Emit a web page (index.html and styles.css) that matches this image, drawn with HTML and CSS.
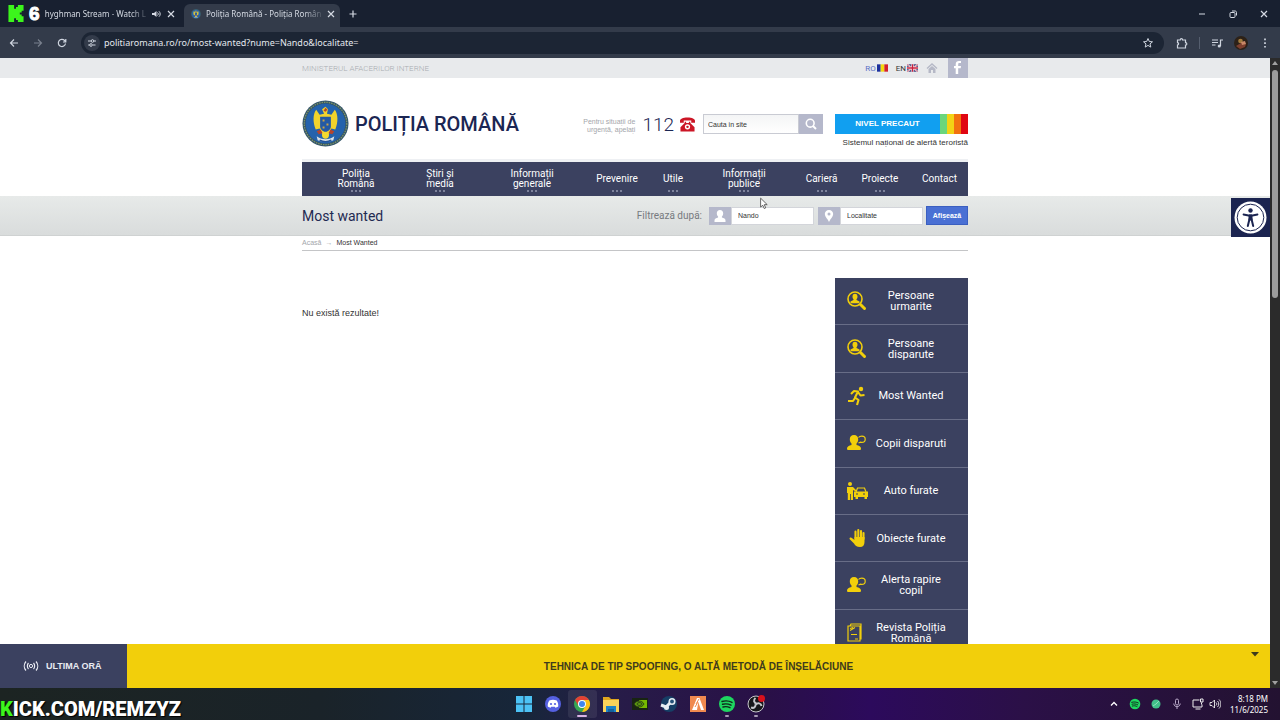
FILE: index.html
```html
<!DOCTYPE html>
<html lang="ro">
<head>
    <meta charset="utf-8">
    <title>Poliția Română - Most wanted</title>
    <link rel="stylesheet" href="styles.css">
</head>
<body>

<svg class="defs" width="0" height="0" aria-hidden="true">
    <symbol id="i-close" viewBox="0 0 10 10"><path d="M2 2l6 6M8 2l-6 6" fill="none" stroke="currentColor" stroke-width="1.2"/></symbol>
    <symbol id="i-lens" viewBox="0 0 22 22">
        <circle cx="9" cy="9" r="7" fill="none" stroke="currentColor" stroke-width="1.6"/>
        <path d="M9 3.800c1.700 0 2.500 1.200 2.500 2.800s-.5 2.200-1 2.700v.8l3 1.400v1.700h-9v-1.700l3-1.400v-.8c-.5-.5-1-1.100-1-2.700S7.300 3.800 9 3.800z" fill="currentColor"/>
        <path d="M14.500 14.500l4 4" stroke="currentColor" stroke-width="3" stroke-linecap="round"/>
    </symbol>
    <symbol id="i-child" viewBox="0 0 22 22">
        <path d="M8 3c2.800 0 4.200 1.800 4.200 4.300 0 2-.7 3.500-1.700 4.300v1.400c2.500.6 4.500 1.600 4.500 3.500 0 1-.5 1.500-1.500 1.500h-11c-1 0-1.500-.5-1.500-1.500 0-1.900 2-2.900 4.500-3.500v-1.400c-1-.8-1.700-2.300-1.700-4.300C3.800 4.800 5.200 3 8 3z" fill="currentColor"/>
        <path d="M12.500 5.500c.8-1 2-1.300 3.300-1.300 2 0 3.400 1.300 3.400 3s-1.400 3.200-3.400 3.200c-.5 0-1-.1-1.400-.3L12.500 11" fill="none" stroke="currentColor" stroke-width="1.200"/>
    </symbol>
    <symbol id="i-spotify" viewBox="0 0 18 18">
        <circle cx="9" cy="9" r="8" fill="#1ed760"/>
        <path d="M4 6.500c3.500-1 7-.7 10 .9M4.500 9.300c3-.8 6-.5 8.500.9M5 12c2.500-.7 5-.4 7 .7" fill="none" stroke="#10281a" stroke-width="1.400" stroke-linecap="round"/>
    </symbol>
    <symbol id="i-crest" viewBox="0 0 48 48">
        <circle cx="24" cy="24" r="23.500" fill="#34556a"/>
        <circle cx="24" cy="24" r="21.700" fill="none" stroke="#7f9465" stroke-width="1.300" stroke-dasharray="1.500 1"/>
        <circle cx="24" cy="24" r="20.300" fill="#2462ac"/>
        <path d="M24 7l2.500 2.500-1 4.500 4.500 1 3.500-5c3.500 4.500 3.500 13 .5 20l-4-1-3 7h-6l-3-7-4 1c-3-7-3-15.500.5-20l3.500 5 4.500-1-2-4.500z" fill="#f1d32c"/>
        <path d="M18.500 17h11v10c0 3-2.500 4.500-5.500 6-3-1.500-5.500-3-5.500-6z" fill="#2359a4"/>
        <path d="M21 20h2v2h-2zM25 24h2v2h-2zM21 27h2v2h-2z" fill="#c9a448"/>
        <path d="M24 8l2 2-2 2-2-1zM15 32l4-2 2 4-4 1zM33 32l-4-2-2 4 4 1z" fill="#b5452e"/>
        <circle cx="24" cy="36" r="3.500" fill="#f3d92f"/>
        <path d="M15 37c5 4 13 4 18 0l-1 4c-5 2-11 2-16 0z" fill="#dbe3e6"/>
        <path d="M18 41c4 2 8 2 12 0" fill="none" stroke="#24549b" stroke-width="1.500"/>
    </symbol>
</svg>

<div class="window">

    <div class="tabbar">
        <div class="tab tab-stream">
            <svg class="kick" viewBox="0 0 16 18"><path d="M0 0h6v4h2V2h2V0h6v6h-2v2h-2v2h2v2h2v6h-6v-2H8v-2H6v4H0z" fill="#3cf51c"/></svg>
            <b class="count">6</b>
            <span class="tab-title">hyghman Stream - Watch L</span>
            <svg class="icon-10" viewBox="0 0 10 10"><path d="M1 4h2l2.500-2v6L3 6H1z" fill="currentColor"/><path d="M6.500 3.500c1 1 1 2 0 3M8 2.300c1.600 1.600 1.600 3.800 0 5.400" fill="none" stroke="currentColor"/></svg>
            <button class="plain" aria-label="Close tab"><svg class="icon-10"><use href="#i-close"/></svg></button>
        </div>
        <div class="tab tab-active">
            <svg class="icon-10"><use href="#i-crest"/></svg>
            <span class="tab-title">Poliția Română - Poliția Român</span>
            <button class="plain" aria-label="Close tab"><svg class="icon-10"><use href="#i-close"/></svg></button>
        </div>
        <button class="plain new-tab" aria-label="New tab"><svg class="icon-10" viewBox="0 0 10 10"><path d="M5 1.500v7M1.500 5h7" stroke="currentColor" stroke-width="1.200"/></svg></button>
        <div class="window-buttons">
            <button class="plain" aria-label="Minimize"><svg class="icon-10" viewBox="0 0 10 10"><path d="M2 5h6" stroke="currentColor"/></svg></button>
            <button class="plain" aria-label="Restore"><svg class="icon-10" viewBox="0 0 10 10"><rect x="2" y="3.500" width="5" height="5" rx="1" fill="none" stroke="currentColor"/><path d="M4 2h3c1 0 1.500.5 1.500 1.500V6.500" fill="none" stroke="currentColor"/></svg></button>
            <button class="plain" aria-label="Close"><svg class="icon-10"><use href="#i-close"/></svg></button>
        </div>
    </div>

    <div class="toolbar">
        <button class="plain" aria-label="Back"><svg class="icon-10" viewBox="0 0 10 10"><path d="M9 5H1.500M5 1.500L1.500 5 5 8.500" fill="none" stroke="currentColor" stroke-width="1.200"/></svg></button>
        <button class="plain dim" aria-label="Forward"><svg class="icon-10" viewBox="0 0 10 10"><path d="M1 5h7.500M5 1.500L8.500 5 5 8.500" fill="none" stroke="currentColor" stroke-width="1.200"/></svg></button>
        <button class="plain" aria-label="Reload"><svg class="icon-10" viewBox="0 0 10 10"><path d="M8.500 5.500A3.600 3.600 0 1 1 7.600 2.500L8.600 3.700M8.800 1v3H6" fill="none" stroke="currentColor" stroke-width="1.200"/></svg></button>
        <div class="address">
            <span class="site-info"><svg class="icon-10" viewBox="0 0 10 10"><path d="M1 3h3M8.500 7H6M1.200 7h1.300M7 3h2" stroke="currentColor"/><circle cx="5.500" cy="3" r="1.300" fill="none" stroke="currentColor"/><circle cx="4" cy="7" r="1.300" fill="none" stroke="currentColor"/></svg></span>
            <input type="text" class="url" aria-label="Address" value="politiaromana.ro/ro/most-wanted?nume=Nando&amp;localitate=">
            <button class="plain" aria-label="Bookmark"><svg class="icon-12" viewBox="0 0 12 12"><path d="M6 1.500l1.300 3 3.200.3L8 6.900l.8 3.200L6 8.400l-2.800 1.700L4 6.900 1.500 4.800l3.200-.3z" fill="none" stroke="currentColor"/></svg></button>
        </div>
        <div class="toolbar-end">
            <svg class="icon-12" viewBox="0 0 12 12"><path d="M1.500 3h2.700c0-1.800 2.400-1.800 2.400 0h2.900v2.700c1.800 0 1.800 2.400 0 2.400v2.900h-8V8c1.500-.3 1.500-2 0-2.300z" fill="none" stroke="currentColor" stroke-width="1.200"/></svg>
            <span class="sep"></span>
            <svg class="icon-12" viewBox="0 0 12 12"><path d="M1 3h6M1 5.500h6M1 8h3.500M9.500 9V3H12" fill="none" stroke="currentColor" stroke-width="1.200"/><circle cx="8.300" cy="9" r="1.600" fill="currentColor"/></svg>
            <svg class="icon-14" viewBox="0 0 14 14"><circle cx="7" cy="7" r="7" fill="#2c2118"/><circle cx="6.500" cy="5" r="2.300" fill="#a17b3e"/><path d="M2 10l5-3 5 1-1 3-5 2z" fill="#7d3f2e"/><path d="M7 6l4-1 1 3-4 1z" fill="#c98868"/></svg>
            <svg class="icon-12" viewBox="0 0 12 12"><path d="M6 1.500v1.700M6 5.200v1.700M6 8.900v1.700" stroke="currentColor" stroke-width="1.700"/></svg>
        </div>
    </div>

    <div class="viewport">
        <div class="page">
            <div class="site">

                <div class="topstrip">
                    <div class="wrap topstrip-in">
                        <span class="ministry">MINISTERUL AFACERILOR INTERNE</span>
                        <a href="#" class="lang lang-ro">RO<svg class="flag" viewBox="0 0 12 8"><path d="M0 0h4v8H0z" fill="#1c2f9c"/><path d="M4 0h4v8H4z" fill="#f5d80c"/><path d="M8 0h4v8H8z" fill="#d3202c"/></svg></a>
                        <a href="#" class="lang">EN<svg class="flag" viewBox="0 0 12 8"><path d="M0 0h12v8H0z" fill="#2a3272"/><path d="M0 0l12 8M12 0L0 8" stroke="#fff" stroke-width="1.600"/><path d="M0 0l12 8M12 0L0 8" stroke="#d3324a" stroke-width=".7"/><path d="M6 0v8M0 4h12" stroke="#fff" stroke-width="2.600"/><path d="M6 0v8M0 4h12" stroke="#c9203c" stroke-width="1.500"/></svg></a>
                        <a href="#" class="home" aria-label="Acasă"><svg class="icon-12" viewBox="0 0 12 12"><path d="M1 6.500L6 2l5 4.500" fill="none" stroke="#b5b8c6" stroke-width="1.400"/><path d="M2.500 7L6 4l3.500 3v4h-2.500V8H5v3H2.500z" fill="#b5b8c6"/></svg></a>
                        <a href="#" class="fb" aria-label="Facebook"><svg viewBox="0 0 20 20"><path d="M13 5h-1.500c-1 0-1.300.5-1.300 1.400V8H13l-.3 2.300h-2.500V16H7.700v-5.700H6V8h1.700V6.200C7.700 4 9 2.900 11 2.900l2 .1z" fill="#fff"/></svg></a>
                    </div>
                </div>

                <div class="wrap header">
                    <a href="#" class="brand"><svg class="crest"><use href="#i-crest"/></svg>POLIȚIA ROMÂNĂ</a>
                    <div class="header-tools">
                        <span class="urgent">Pentru situații de urgență, apelați</span>
                        <span class="tel">112</span>
                        <svg class="phone" viewBox="0 0 18 16"><path d="M1 6V4c0-2 3-3.500 8-3.500S17 2 17 4v2h-4V3.800H5V6z" fill="#cc1626"/><path d="M6 5h1.500v1.500h3V5H12v1.500l4.500 4.500v4.500h-15V11L6 6.500z" fill="#cc1626"/><circle cx="9" cy="10.500" r="2.800" fill="#fff"/><circle cx="9" cy="10.500" r="1.300" fill="#cc1626"/></svg>
                        <form class="search">
                            <input type="text" aria-label="Cauta in site" value="Cauta in site">
                            <button type="button" aria-label="Caută"><svg class="icon-12" viewBox="0 0 12 12"><circle cx="5.200" cy="5.200" r="3.900" fill="none" stroke="#fff" stroke-width="1.600"/><path d="M8 8l3 3" stroke="#fff" stroke-width="2"/></svg></button>
                        </form>
                        <div class="alert">
                            <a href="#" class="alert-level"><span>NIVEL PRECAUT</span><i class="c-green"></i><i class="c-yellow"></i><i class="c-orange"></i><i class="c-red"></i></a>
                            <div class="alert-note">Sistemul național de alertă teroristă</div>
                        </div>
                    </div>
                </div>

                <nav class="wrap menu">
                    <a href="#" class="more">Poliția<br>Română</a>
                    <a href="#" class="more">Știri și<br>media</a>
                    <a href="#" class="more">Informații<br>generale</a>
                    <a href="#" class="more">Prevenire</a>
                    <a href="#" class="more">Utile</a>
                    <a href="#" class="more">Informații<br>publice</a>
                    <a href="#" class="more">Carieră</a>
                    <a href="#" class="more">Proiecte</a>
                    <a href="#">Contact</a>
                </nav>

                <div class="titleband">
                    <div class="wrap titleband-in">
                        <h1>Most wanted</h1>
                        <form class="filter">
                            <span class="filter-label">Filtrează după:</span>
                            <label for="nume" aria-label="Nume"><svg viewBox="0 0 22 18"><path d="M11 3c2 0 3.200 1.300 3.200 3.200 0 1.500-.6 2.600-1.300 3.300v1.100c2 .5 3.600 1.200 3.600 2.900V15h-11v-1.500c0-1.700 1.600-2.400 3.600-2.900V9.500c-.7-.7-1.300-1.800-1.300-3.300C7.800 4.300 9 3 11 3z" fill="#fff"/></svg></label>
                            <input type="text" id="nume" value="Nando">
                            <label for="localitate" aria-label="Localitate" class="second"><svg viewBox="0 0 22 18"><path d="M11 3c2.500 0 4.200 1.700 4.200 4 0 2.700-3 5-4.200 8-1.200-3-4.200-5.300-4.200-8 0-2.300 1.700-4 4.200-4z" fill="#fff"/><circle cx="11" cy="7" r="1.500" fill="#b5b8cb"/></svg></label>
                            <input type="text" id="localitate" value="Localitate">
                            <button type="button">Afișează</button>
                        </form>
                    </div>
                </div>

                <div class="wrap crumbs"><a href="#">Acasă</a><span class="arrow">→</span><span>Most Wanted</span></div>

                <div class="wrap main">
                    <p class="result">Nu există rezultate!</p>
                    <div class="sidebar">
                        <a href="#"><svg><use href="#i-lens"/></svg><span>Persoane urmarite</span></a>
                        <a href="#"><svg><use href="#i-lens"/></svg><span>Persoane disparute</span></a>
                        <a href="#"><svg viewBox="0 0 22 22"><circle cx="15" cy="4" r="2.200" fill="currentColor"/><path d="M5 9l3-3 4 .5-3 6 3.500 2.500-1.500 5M12 7l2.500 3.500L18.500 10M9 13l-2 3H2" fill="none" stroke="currentColor" stroke-width="2.100" stroke-linejoin="round"/></svg><span>Most Wanted</span></a>
                        <a href="#"><svg><use href="#i-child"/></svg><span>Copii disparuti</span></a>
                        <a href="#"><svg viewBox="0 0 22 22"><circle cx="4" cy="4" r="2" fill="currentColor"/><path d="M1 7h6l3 3v1.500L7 10v10H4.800v-6h-.8v6H1.800v-7H1z" fill="currentColor"/><path d="M10 12l1.500-4h7l1.500 4" fill="none" stroke="currentColor" stroke-width="1.200"/><path d="M8 11.500h14v5.500h-1V19h-2.500v-2H12V19H9.500v-2H8z" fill="currentColor"/><path d="M10 14h2M17 14h2" stroke="#3b4160" stroke-width="1.200"/></svg><span>Auto furate</span></a>
                        <a href="#"><svg viewBox="0 0 22 22"><path d="M9.500 12V4.500M12.300 11V3M15 11V4M17.500 12V6" stroke="currentColor" stroke-width="2.100" stroke-linecap="round"/><path d="M8.500 10h10v5c0 3-1.500 5-4.500 5-3.500 0-4.700-1.500-6-3.500L3.500 12c0-1.500 1.500-1.800 2.700-.8L8.500 13z" fill="currentColor"/></svg><span>Obiecte furate</span></a>
                        <a href="#"><svg><use href="#i-child"/></svg><span>Alerta rapire copil</span></a>
                        <a href="#"><svg viewBox="0 0 22 22"><path d="M2 4h12v15H2zM4 4l1-2h10v15h-1M4 6.500l3-1M4 8.500l5-3M5 12.500h6M9 17h3" fill="none" stroke="currentColor" stroke-width="1.200"/></svg><span>Revista Poliția Română</span></a>
                    </div>
                </div>

                <button class="access" aria-label="Accesibilitate"><svg viewBox="0 0 39 39"><circle cx="19.500" cy="19.500" r="16" fill="#fff"/><circle cx="19.500" cy="19.500" r="13.300" fill="none" stroke="#1b2450" stroke-width="1"/><circle cx="19.500" cy="12.500" r="2.200" fill="#1b2450"/><path d="M12.500 16.500l5 1h4l5-1" fill="none" stroke="#1b2450" stroke-width="1.800" stroke-linecap="round"/><path d="M18 17h3v5h-3z" fill="#1b2450" stroke="#1b2450"/><path d="M18.500 21l-1.700 7M20.500 21l1.700 7" stroke="#1b2450" stroke-width="2" stroke-linecap="round"/></svg></button>
            </div>

            <div class="ticker">
                <div class="ticker-label"><svg class="live" viewBox="0 0 16 12"><circle cx="8" cy="6" r="1.600" fill="none" stroke="currentColor"/><path d="M5.500 3c-1.500 1.600-1.500 4.400 0 6M10.500 3c1.500 1.600 1.500 4.400 0 6M3 1.500c-2.300 2.600-2.300 6.400 0 9M13 1.500c2.300 2.600 2.300 6.400 0 9" fill="none" stroke="currentColor" stroke-width="1.200"/></svg>ULTIMA ORĂ</div>
                <a href="#" class="ticker-news">TEHNICA DE TIP SPOOFING, O ALTĂ METODĂ DE ÎNȘELĂCIUNE</a>
                <button class="ticker-toggle" aria-label="Ascunde"><svg viewBox="0 0 8 5"><path d="M0 0h8L4 4.500z" fill="#3e3b1c"/></svg></button>
            </div>
        </div>

        <div class="scrollbar">
            <svg viewBox="0 0 10 10"><path d="M5 3l3 4H2z" fill="#a0a0a0"/></svg>
            <div class="thumb"></div>
            <svg class="down" viewBox="0 0 10 10"><path d="M5 7l3-4H2z" fill="#a0a0a0"/></svg>
        </div>
    </div>

    <div class="taskbar">
        <div class="watermark"><b>K</b>ICK.COM/REMZYZ</div>
        <div class="apps">
            <span><svg viewBox="0 0 18 18"><path d="M1 1h7.500v7.500H1zM9.500 1H17v7.500H9.500zM1 9.500h7.500V17H1zM9.500 9.500H17V17H9.500z" fill="#4cc2f5"/></svg></span>
            <span><svg viewBox="0 0 18 18"><circle cx="9" cy="9" r="8" fill="#5560e0"/><path d="M5.300 5.500c2.400-1 5-1 7.400 0 1.300 2 1.800 4 1.500 6-1 .8-2 1-2.800 1.200l-.6-1H7.200l-.6 1c-.8-.2-1.800-.4-2.800-1.200-.3-2 .2-4 1.500-6z" fill="#fff"/><circle cx="7" cy="9" r="1.100" fill="#5560e0"/><circle cx="11" cy="9" r="1.100" fill="#5560e0"/></svg></span>
            <span class="current"><svg viewBox="0 0 18 18"><circle cx="9" cy="9" r="8" fill="#36a852"/><path d="M2.070 5A8 8 0 0 1 15.930 5H9a4 4 0 0 0-3.460 6z" fill="#e44134"/><path d="M15.930 5A8 8 0 0 1 9 17l3.460-6A4 4 0 0 0 9 5z" fill="#fbc116"/><circle cx="9" cy="9" r="4" fill="#fff"/><circle cx="9" cy="9" r="3" fill="#3f86f0"/></svg></span>
            <span><svg viewBox="0 0 18 18"><path d="M1 2h6l2 2h8v5H1z" fill="#e0a51e"/><path d="M1 5h16v12H1z" fill="#fbd35b"/><path d="M4 11h10v6H4z" fill="#1f82c8"/><path d="M6 14h6v3H6z" fill="#14639f"/></svg></span>
            <span><svg viewBox="0 0 18 18"><path d="M1 3h16v12H1z" fill="#182412"/><path d="M8 5h8v8H8z" fill="#76b900"/><path d="M3 9c2-4 8-4 10 0-2 4-8 4-10 0zm3 0c1-2 4-2 5 0-1 2-4 2-5 0z" fill="#5a9410" stroke="#223215" stroke-width=".8"/></svg></span>
            <span><svg viewBox="0 0 18 18"><circle cx="9" cy="9" r="8" fill="#163f66"/><path d="M1 10l5 2 4-4 1-3" fill="none" stroke="#e6edf3" stroke-width="3"/><circle cx="12" cy="6.500" r="3.500" fill="#e6edf3"/><circle cx="12" cy="6.500" r="1.900" fill="#235178"/><circle cx="6.500" cy="12.500" r="2.500" fill="#e6edf3"/></svg></span>
            <span><svg viewBox="0 0 18 18"><path d="M1 1h16v16H1z" fill="#f08a50"/><path d="M8 3h2.500L15 15h-3L9.300 7 8 15H3z" fill="#fff"/><path d="M6 12l3-5M7 9l3-5" stroke="#f08a50"/></svg></span>
            <span class="open"><svg><use href="#i-spotify"/></svg></span>
            <span class="open"><svg viewBox="0 0 18 18"><circle cx="9" cy="9" r="8" fill="#17171b" stroke="#c7c7cd" stroke-width="1"/><path d="M8.500 3c-2.500 2-1.500 5 1 5.500M14.500 11c-.5-3-4-3.500-5.500-1.500M4 12.500c3 1.200 5-.8 4.500-3.500" fill="none" stroke="#c7c7cd" stroke-width="2"/><circle cx="14.500" cy="3.500" r="3.500" fill="#d8101c"/></svg></span>
        </div>
        <div class="tray">
            <svg class="icon-12" viewBox="0 0 12 12"><path d="M3 7.500L6 4.500l3 3" fill="none" stroke="#fff" stroke-width="1.300"/></svg>
            <svg class="icon-12"><use href="#i-spotify"/></svg>
            <svg class="icon-12" viewBox="0 0 12 12"><circle cx="6" cy="6" r="4.500" fill="#41c08a"/><path d="M6 6l3-3M3 8l3-2" stroke="#8ce0ba"/></svg>
            <svg class="icon-12" viewBox="0 0 12 12"><rect x="4.500" y="1" width="3" height="6" rx="1.500" fill="none" stroke="#b8a8c8"/><path d="M2.800 5.500c0 4.200 6.400 4.200 6.400 0M6 8.800V11" fill="none" stroke="#b8a8c8"/></svg>
            <span class="net">
                <svg class="icon-12" viewBox="0 0 12 12"><path d="M7.500 2H1v7h9V6.500M3.500 11h5M9.500 4.500V6.500M8.500 1h2.500v3H8.500z" fill="none" stroke="#eee"/></svg>
                <svg class="icon-12" viewBox="0 0 12 12"><path d="M1 4.500h2L5.500 2v8L3 7.500H1zM7 4.500c1 1 1 2 0 3M8.500 3c1.700 1.700 1.700 4.300 0 6M10 1.500c2.500 2.500 2.500 6.500 0 9" fill="none" stroke="#eee" stroke-width=".9"/></svg>
            </span>
            <div class="clock">8:18 PM<br>11/6/2025</div>
        </div>
    </div>
</div>

<svg class="cursor" viewBox="0 0 9 14"><path d="M.7 1v10l2.400-2 1.700 3.700 1.600-.8L4.800 8.300h3.300z" fill="#fff" stroke="#444" stroke-width=".9"/></svg>

</body>
</html>
```
FILE: styles.css
```css
* {
  box-sizing: border-box;
}

body {
  margin: 0;
  font-family: "Liberation Sans", Arial, sans-serif;
  color: #333;
}

a {
  color: inherit;
  text-decoration: none;
}

svg {
  display: block;
  flex: none;
}

input, button {
  font-family: inherit;
  border: none;
  margin: 0;
  padding: 0;
  border-radius: 0;
}

.defs {
  position: absolute;
}

.icon-10 { width: 10px; height: 10px; }
.icon-12 { width: 12px; height: 12px; }
.icon-14 { width: 14px; height: 14px; }

.window {
  display: flex;
  flex-direction: column;
  height: 100vh;
  overflow: hidden;
}

/* browser */
.tabbar {
  display: flex;
  align-items: center;
  height: 27px;
  background: #182030;
  color: #d5dae3;
  font: 8px "Noto Sans", sans-serif;
}

.plain {
  background: none;
  color: inherit;
}

.tab {
  display: flex;
  align-items: center;
}

.tab-title {
  flex: 1;
  white-space: nowrap;
  -webkit-mask-image: linear-gradient(to right, #000 85%, rgba(0, 0, 0, 0.2));
  mask-image: linear-gradient(to right, #000 85%, rgba(0, 0, 0, 0.2));
}

.tab-stream {
  width: 184px;
  padding: 0 8px;
  gap: 5px;
}

.kick {
  width: 16px;
  height: 17px;
}

.count {
  width: 14px;
  font: bold 19px/20px "Liberation Sans", sans-serif;
  text-align: center;
  color: #fff;
  -webkit-text-stroke: 1px #fff;
}

.tab-active {
  align-self: flex-end;
  width: 156px;
  height: 23px;
  padding: 0 6px 4px 7px;
  gap: 5px;
  background: #333b4a;
  border-radius: 6px 6px 0 0;
}

.new-tab {
  margin-left: 8px;
}

.window-buttons {
  display: flex;
  gap: 21px;
  margin-left: auto;
  padding-right: 11px;
}

.toolbar {
  display: flex;
  align-items: center;
  height: 31px;
  padding: 0 9px;
  gap: 14px;
  background: #333b4a;
  color: #cfd5df;
}

.dim {
  color: #79808d;
}

.address {
  display: flex;
  align-items: center;
  flex: 1;
  height: 22px;
  margin-right: -2px;
  padding: 0 10px 0 3px;
  border-radius: 11px;
  background: #1c2534;
}

.site-info {
  display: flex;
  align-items: center;
  justify-content: center;
  width: 16px;
  height: 16px;
  border-radius: 8px;
  background: #333b4a;
}

.url {
  flex: 1;
  margin-left: 4px;
  background: none;
  color: #e4e8ee;
  font: 9px "Noto Sans", sans-serif;
}

.toolbar-end {
  display: flex;
  align-items: center;
  gap: 11px;
}

.sep {
  width: 1px;
  height: 12px;
  background: #555e6e;
}

.viewport {
  display: flex;
  flex: 1;
  min-height: 0;
}

.page {
  display: flex;
  flex-direction: column;
  flex: 1;
  background: #fff;
}

.site {
  position: relative;
  flex: 1;
  min-height: 0;
  overflow: hidden;
}

.scrollbar {
  display: flex;
  flex-direction: column;
  width: 10px;
  background: #2b2b2b;
}

.scrollbar svg {
  width: 10px;
  height: 10px;
}

.thumb {
  height: 228px;
  margin: 2px;
  border-radius: 3px;
  background: #9c9c9c;
}

.down {
  margin-top: auto;
}

/* site */
.wrap {
  max-width: 666px;
  margin: 0 auto;
}

.topstrip {
  background: #e8eaec;
}

.topstrip-in {
  display: flex;
  align-items: center;
  height: 20px;
  font: 8px Roboto, sans-serif;
}

.ministry {
  flex: 1;
  color: #a9adb2;
  font-weight: 300;
}

.lang {
  display: flex;
  align-items: center;
  gap: 1px;
  margin-right: 8px;
}

.lang-ro {
  color: #5b6fc4;
}

.flag {
  width: 11px;
  height: 8px;
}

.fb {
  width: 20px;
  margin-left: 10px;
  background: #b5b8cb;
}

.header {
  display: flex;
  justify-content: space-between;
  height: 84px;
  padding-top: 22px;
  border-bottom: 3px solid #eef0f3;
}

.brand {
  display: flex;
  align-items: center;
  gap: 6px;
  height: 47px;
  font: 500 20px Roboto, sans-serif;
  color: #1b2653;
}

.crest {
  width: 47px;
  height: 47px;
}

.header-tools {
  display: flex;
  padding-top: 14px;
}

.urgent {
  width: 58px;
  padding-top: 4px;
  font-size: 7px;
  line-height: 8px;
  text-align: right;
  color: #a4a6ab;
}

.tel {
  margin-left: 7px;
  font: 300 19px/22px Roboto, sans-serif;
  color: #1b2653;
}

.phone {
  width: 17px;
  height: 15px;
  margin: 3px 7px 0 5px;
}

.search {
  display: flex;
  width: 120px;
  height: 20px;
}

.search input {
  width: 96px;
  padding: 0 4px;
  border: 1px solid #c9cbd3;
  background: linear-gradient(#f4f5f6, #fff);
  font-size: 7px;
  color: #333;
}

.search button {
  display: flex;
  align-items: center;
  justify-content: center;
  flex: 1;
  background: #b5b8cb;
}

.alert {
  width: 133px;
  margin-left: 12px;
}

.alert-level {
  display: flex;
  height: 20px;
  background: #119ff0;
}

.alert-level span {
  flex: 1;
  text-align: center;
  font: bold 8px/20px "Liberation Sans", sans-serif;
  color: #fff;
}

.alert-level i {
  width: 7px;
}

.c-green { background: #6bd67c; }
.c-yellow { background: #f3d315; }
.c-orange { background: #f2720f; }
.c-red { background: #e00612; }

.alert-note {
  margin-top: 4px;
  font-size: 8px;
  line-height: 10px;
  text-align: right;
  white-space: nowrap;
}

.menu {
  display: grid;
  grid-template-columns: 84fr 84fr 100fr 70fr 42fr 100fr 55fr 62fr 57fr;
  align-items: center;
  height: 34px;
  padding-left: 12px;
  background: #3b4160;
  color: #fff;
  font: 10px/10px Roboto, sans-serif;
  text-align: center;
}

.menu a {
  position: relative;
}

/* three dots under the entries that open a submenu */
.more::after {
  content: "";
  position: absolute;
  left: 50%;
  top: 50%;
  width: 10px;
  height: 2px;
  margin: 11px 0 0 -5px;
  background: repeating-linear-gradient(to right, #7d829b 0 2px, transparent 2px 4px);
}

.titleband {
  background: linear-gradient(#e7eae9, #d9dcdc);
  border-bottom: 1px solid #cfd2d2;
}

.titleband-in {
  display: flex;
  align-items: center;
  justify-content: space-between;
  height: 39px;
}

h1 {
  margin: 0;
  font: 14px Roboto, sans-serif;
  color: #1f2a52;
}

.filter {
  display: flex;
  align-items: center;
}

.filter-label {
  margin-right: 7px;
  font: 10px Roboto, sans-serif;
  color: #777a80;
}

.filter label {
  width: 22px;
  height: 18px;
  background: #b5b8cb;
}

.filter .second {
  margin-left: 4px;
}

.filter input {
  width: 83px;
  height: 18px;
  padding: 0 6px;
  border: 1px solid #d3d5da;
  background: #fff;
  color: #333;
  font-size: 7px;
}

.filter button {
  width: 42px;
  height: 19px;
  margin-left: 3px;
  border: 1px solid #3b5fc0;
  background: #4a70d4;
  color: #fff;
  font-size: 7px;
  font-weight: bold;
}

.crumbs {
  display: flex;
  gap: 4px;
  height: 15px;
  border-bottom: 1px solid #c4c5c7;
  font-size: 7px;
  line-height: 14px;
  color: #333;
}

.crumbs a, .arrow {
  color: #a4a6ab;
}

.main {
  display: flex;
  align-items: flex-start;
  justify-content: space-between;
  padding-top: 27px;
}

.result {
  margin: 29px 0 0;
  font-size: 9px;
  line-height: 12px;
}

.sidebar {
  display: grid;
  grid-auto-rows: 1fr;
  width: 133px;
  height: 379px;
  background: #3b4160;
  color: #fff;
}

.sidebar a {
  display: flex;
  align-items: center;
  justify-content: space-between;
  padding: 0 18px 0 11px;
  border-bottom: 1px solid #686d87;
  font: 11px/11px Roboto, sans-serif;
  text-align: center;
}

.sidebar svg {
  width: 22px;
  height: 22px;
  color: #f2cf0b;
}

.sidebar span {
  width: 78px;
}

.access {
  position: absolute;
  top: 140px;
  right: 0;
  width: 39px;
  height: 39px;
  background: #1b2450;
}

.ticker {
  display: flex;
  height: 44px;
  background: #f2cf0b;
  font-size: 9px;
  font-weight: bold;
}

.ticker-label {
  display: flex;
  align-items: center;
  gap: 7px;
  width: 127px;
  padding-left: 23px;
  background: #3b4160;
  color: #e9ebf2;
}

.live {
  width: 16px;
  height: 12px;
}

.ticker-news {
  flex: 1;
  align-self: center;
  font-size: 10px;
  text-align: center;
  color: #3e3b1c;
}

.ticker-toggle {
  align-self: flex-start;
  width: 8px;
  margin: 8px 11px 0 -19px;
  background: none;
}

/* desktop */
.taskbar {
  display: grid;
  grid-template-columns: 1fr auto 1fr;
  align-items: center;
  height: 32px;
  background: linear-gradient(to right, #1c2422 0%, #1a2329 25%, #17263a 41%, #271c48 48%, #291047 60%, #2c0a5c 68%, #2b1047 80%, #231231 100%);
}

.watermark {
  align-self: end;
  color: #fff;
  font: 900 20px/22px Roboto, "Liberation Sans", sans-serif;
  text-shadow: 1px 1px 1px #000;
  white-space: nowrap;
}

.watermark b {
  color: #3cf51c;
  font-weight: 900;
}

.apps {
  display: flex;
}

.apps span {
  display: flex;
  flex-direction: column;
  align-items: center;
  justify-content: center;
  position: relative;
  width: 29px;
  height: 28px;
}

.apps svg {
  width: 18px;
  height: 18px;
}

.apps .current {
  background: rgba(255, 255, 255, 0.08);
  border-radius: 3px;
}

.current::after, .open::after {
  content: "";
  position: absolute;
  bottom: 1px;
  width: 10px;
  height: 2px;
  border-radius: 1px;
  background: #d9b3e6;
}

.open::after {
  width: 4px;
  background: #a79bb5;
}

.tray {
  display: flex;
  align-items: center;
  justify-content: flex-end;
  gap: 9px;
  padding-right: 12px;
}

.net {
  display: flex;
  gap: 5px;
}

.clock {
  width: 38px;
  color: #fff;
  font: 8px/11px "Noto Sans", sans-serif;
  text-align: right;
  white-space: nowrap;
}

.cursor {
  position: absolute;
  left: 760px;
  top: 197px;
  width: 8px;
  height: 13px;
}
```
